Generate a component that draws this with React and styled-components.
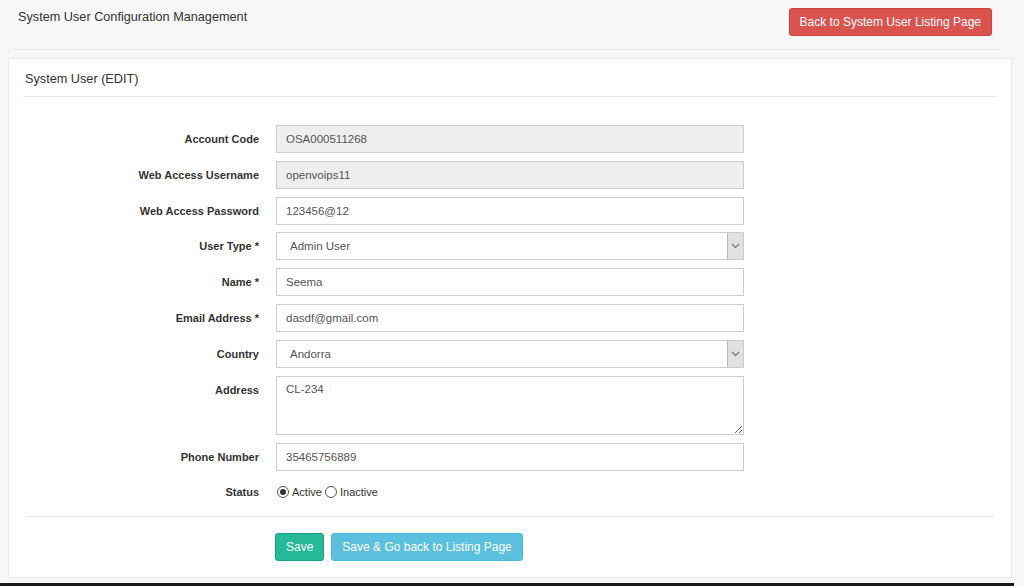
import React, { useState } from "react";
import styled, { createGlobalStyle } from "styled-components";

const GlobalStyle = createGlobalStyle`
  html, body {
    margin: 0;
    padding: 0;
    background: #f7f7f7;
    font-family: "Liberation Sans", Arial, sans-serif;
    color: #333;
  }
  * { box-sizing: border-box; }
`;

const Page = styled.div`
  width: 1024px;
  height: 586px;
  display: flex;
  flex-direction: column;
  overflow: hidden;
`;

const Header = styled.div`
  display: flex;
  justify-content: space-between;
  align-items: flex-start;
  margin: 0 24px 0 14px;
  padding: 8px 8px 0 4px;
  height: 50px;
  border-bottom: 1px solid #e6e6e6;
`;

const PageTitle = styled.h3`
  margin: 2px 0 0;
  font-size: 12.7px;
  font-weight: normal;
  color: #333;
`;

const Button = styled.button`
  font-family: inherit;
  font-size: 12px;
  color: #fff;
  background: ${(p) => p.bg};
  border: 1px solid ${(p) => p.border};
  border-radius: 3px;
  height: 28px;
  padding: 0 ${(p) => p.pad || 10}px;
  cursor: pointer;
`;

const Panel = styled.div`
  margin: 8px 12px 0 8px;
  height: 520px;
  background: #fff;
  border: 1px solid #e6e9ed;
  padding: 0 14px 0 14px;
`;

const PanelTitle = styled.div`
  font-size: 12.7px;
  color: #333;
  padding: 13px 2px 0;
  height: 38px;
  border-bottom: 1px solid #e6e9ed;
`;

const Form = styled.div`
  display: grid;
  grid-template-columns: 237px 468px;
  column-gap: 16px;
  row-gap: 7.8px;
  margin-top: 28px;
  align-items: start;
`;

const Label = styled.label`
  text-align: right;
  font-size: 11px;
  font-weight: bold;
  color: #333;
  line-height: ${(p) => p.lh || 28}px;
  padding-top: ${(p) => p.pt || 0}px;
  padding-right: 1px;
`;

const Input = styled.input`
  width: 100%;
  height: 28px;
  border: 1px solid #ccc;
  background: ${(p) => (p.readOnly ? "#eee" : "#fff")};
  font-family: inherit;
  font-size: 11.5px;
  color: #555;
  padding: 0 9px;
  outline: none;
`;

const TextArea = styled.textarea`
  width: 100%;
  height: 59px;
  border: 1px solid #ccc;
  font-family: inherit;
  font-size: 11.5px;
  color: #555;
  padding: 6px 9px;
  outline: none;
  resize: vertical;
  margin-bottom: 1px;
`;

const SelectWrap = styled.div`
  display: flex;
  height: 28px;
  border: 1px solid #ccc;
  background: #fff;
`;

const Select = styled.select`
  flex: 1;
  border: none;
  appearance: none;
  background: transparent;
  font-family: inherit;
  font-size: 11.5px;
  color: #555;
  padding: 0 13px;
  outline: none;
`;

const ArrowBox = styled.span`
  width: 16px;
  background: #e1e1e1;
  border-left: 1px solid #bbb;
  display: flex;
  align-items: center;
  justify-content: center;
`;

const RadioRow = styled.div`
  display: flex;
  align-items: center;
  height: 26px;
  font-size: 11px;
  color: #333;
  padding-left: 1px;
`;

const RadioLabel = styled.label`
  display: flex;
  align-items: center;
  gap: 3px;
  margin-right: 3px;
`;

const Radio = styled.span`
  width: 12px;
  height: 12px;
  border-radius: 50%;
  border: 1px solid #555;
  background: #fff;
  display: flex;
  align-items: center;
  justify-content: center;
  &::after {
    content: "";
    width: 6px;
    height: 6px;
    border-radius: 50%;
    background: ${(p) => (p.checked ? "#333" : "transparent")};
  }
`;

const Divider = styled.div`
  margin: 11px 3px 0;
  border-top: 1px solid #e6e9ed;
`;

const Actions = styled.div`
  display: flex;
  gap: 7px;
  margin-top: 16px;
  padding-left: 252px;
`;

const BottomBar = styled.div`
  margin-top: auto;
  height: 3px;
  width: 1014px;
  background: #1a1a1a;
`;

const Chevron = () => (
  <svg width="9" height="6" viewBox="0 0 9 6">
    <path d="M1 1l3.5 3.5L8 1" fill="none" stroke="#777" strokeWidth="1.2" />
  </svg>
);

const Dropdown = ({ value, options }) => (
  <SelectWrap>
    <Select defaultValue={value}>
      {options.map((o) => (
        <option key={o}>{o}</option>
      ))}
    </Select>
    <ArrowBox>
      <Chevron />
    </ArrowBox>
  </SelectWrap>
);

const App = () => {
  const [status, setStatus] = useState("active");

  return (
    <>
      <GlobalStyle />
      <Page>
        <Header>
          <PageTitle>System User Configuration Management</PageTitle>
          <Button bg="#d9534f" border="#d43f3a">
            Back to System User Listing Page
          </Button>
        </Header>
        <Panel>
          <PanelTitle>System User (EDIT)</PanelTitle>
          <Form>
            <Label>Account Code</Label>
            <Input readOnly defaultValue="OSA000511268" />
            <Label>Web Access Username</Label>
            <Input readOnly defaultValue="openvoips11" />
            <Label>Web Access Password</Label>
            <Input defaultValue="123456@12" />
            <Label>User Type *</Label>
            <Dropdown value="Admin User" options={["Admin User", "Normal User"]} />
            <Label>Name *</Label>
            <Input defaultValue="Seema" />
            <Label>Email Address *</Label>
            <Input defaultValue="dasdf@gmail.com" />
            <Label>Country</Label>
            <Dropdown value="Andorra" options={["Afghanistan", "Andorra", "India"]} />
            <Label lh={16} pt={6}>
              Address
            </Label>
            <TextArea defaultValue="CL-234" />
            <Label>Phone Number</Label>
            <Input defaultValue="35465756889" />
            <Label lh={26}>Status</Label>
            <RadioRow>
              <RadioLabel onClick={() => setStatus("active")}>
                <Radio checked={status === "active"} />
                Active
              </RadioLabel>
              <RadioLabel onClick={() => setStatus("inactive")}>
                <Radio checked={status === "inactive"} />
                Inactive
              </RadioLabel>
            </RadioRow>
          </Form>
          <Divider />
          <Actions>
            <Button bg="#26b99a" border="#169f85">
              Save
            </Button>
            <Button bg="#5bc0de" border="#46b8da">
              Save &amp; Go back to Listing Page
            </Button>
          </Actions>
        </Panel>
        <BottomBar />
      </Page>
    </>
  );
};

export default App;
